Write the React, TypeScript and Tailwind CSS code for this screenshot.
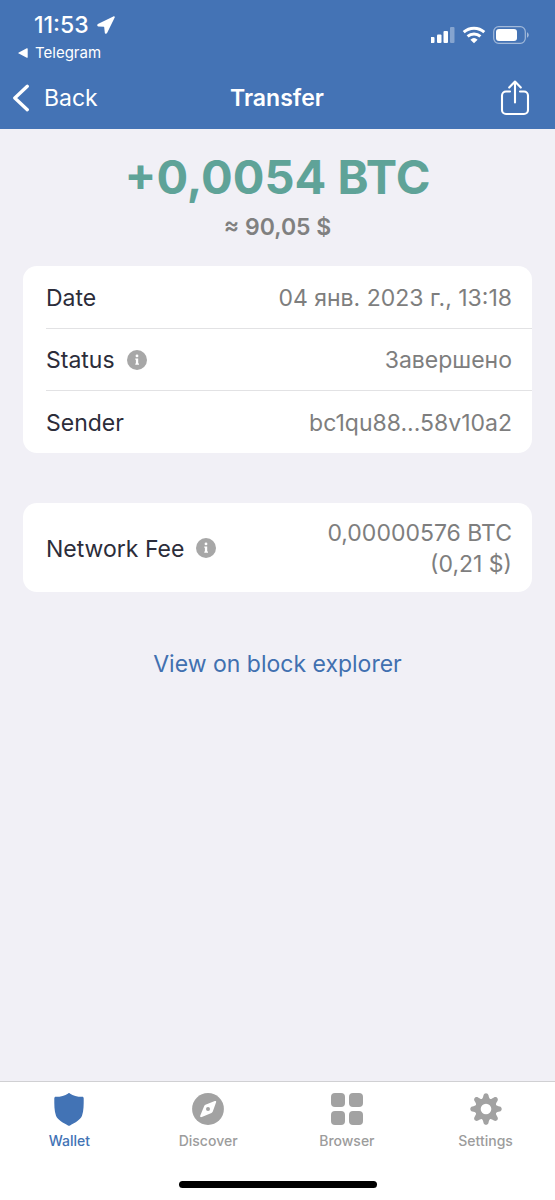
import type { ReactNode } from "react";

function InfoButton({ label }: { label: string }) {
  return (
    <button type="button" aria-label={label} className="ml-3 block pb-0.5">
      <svg viewBox="0 0 20 20" className="block size-5">
        <circle cx="10" cy="10" r="10" fill="#a7a7a7" />
        <circle cx="10" cy="5.9" r="1.4" fill="#fff" />
        <path d="M8.300 8.400h2.900v5h.8v1.400H8.300v-1.400h.6V9.800h-.6z" fill="#fff" />
      </svg>
    </button>
  );
}

function Row({ label, info, children }: { label: string; info?: string; children: ReactNode }) {
  return (
    <div className="flex min-h-[62px] items-center justify-between pt-0.5 pr-5">
      <dt className="flex items-center text-[#2c2d3a]">
        {label}
        {info && <InfoButton label={info} />}
      </dt>
      <dd className="text-right text-[#7e7e7e]">{children}</dd>
    </div>
  );
}

function StatusBar() {
  return (
    <div className="flex justify-between pt-3 pr-6 pl-[18px]">
      <div>
        <div className="flex h-[26px] items-center gap-2 pl-4 text-[23px] font-medium">
          11:53
          <svg viewBox="0 0 18 18" className="size-[18px]" fill="#fff">
            <path d="M16.300.400.900 8.100c-1 .6-.8 2.200.4 2.300l5.500.4c.2 0 .4.200.4.400l.6 5.600c.1 1.200 1.700 1.400 2.300.3L17.700 1.600c.4-.9-.5-1.600-1.400-1.200z" />
          </svg>
        </div>
        <a href="#telegram" className="mt-1 flex h-[22px] items-center gap-[7px] text-[15px]">
          <svg viewBox="0 0 10 10" className="size-[10px]" fill="#fff">
            <path d="M9.700.8v8.400c0 .6-.4.8-.9.5L.8 5.600C.2 5.200.2 4.800.8 4.400L8.800.3c.5-.3.9-.1.9.5z" />
          </svg>
          Telegram
        </a>
      </div>
      <svg viewBox="0 0 100 20" className="mt-[13px] h-5 w-[100px]" fill="#fff">
        <rect x="-1" y="12" width="4.500" height="6" rx="1" />
        <rect x="6" y="9.500" width="4.500" height="8.500" rx="1" />
        <rect x="12.500" y="6" width="4.500" height="12" rx="1" />
        <rect x="19" y="2" width="4.500" height="16" rx="1" opacity=".35" />
        <g fill="none" stroke="#fff" strokeWidth="3">
          <path d="M32.700 7.200a15.500 15.500 0 0 1 20.600 0" />
          <path d="M36.600 11.400a9.600 9.600 0 0 1 12.800 0" />
        </g>
        <path d="M39.400 14.700a5.400 5.400 0 0 1 7.200 0L43 18.300z" />
        <rect x="62.700" y="1.700" width="31.600" height="16.600" rx="5" fill="none" stroke="#fff" strokeWidth="1.200" opacity=".5" />
        <rect x="65" y="4" width="21" height="12" rx="3" />
        <path d="M96 7.300v5.400c2.400-1 2.400-4.400 0-5.400z" opacity=".5" />
      </svg>
    </div>
  );
}

function ShieldIcon() {
  return (
    <svg viewBox="0 0 32 34" className="h-[34px] w-8" fill="#4273b5">
      <path d="M15.200.4c.5-.4 1.100-.4 1.600 0 3.500 2.300 7.200 3.300 12.400 3.400.9 0 1.500.7 1.500 1.600 0 5.800.1 12.200-1.700 17.400-1.600 4.200-6.600 6.600-12 9.700-.6.4-1.400.4-2 0-5.400-3.100-10.400-5.500-12-9.700C1.200 17.600 1.300 11.200 1.300 5.400c0-.9.6-1.600 1.500-1.600 5.200-.1 8.900-1.100 12.400-3.400z" />
    </svg>
  );
}

function CompassIcon() {
  return (
    <svg viewBox="0 0 32 32" className="size-8">
      <circle cx="16" cy="16" r="15.900" fill="#a2a2a2" />
      <path d="M22.800 8c1-.4 1.700.3 1.300 1.300l-3.300 9.200c-.2.600-.7 1.100-1.300 1.400l-9.700 4.200c-1.200.5-2-.3-1.500-1.500l3.800-9.400c.3-.7.700-1.100 1.300-1.400z" fill="#fff" />
      <circle cx="16" cy="16" r="2" fill="#a2a2a2" />
    </svg>
  );
}

function GridIcon() {
  return (
    <svg viewBox="0 0 32 32" className="size-8" fill="#a2a2a2">
      <rect x="0" y="0" width="14" height="14" rx="4" />
      <rect x="18" y="0" width="14" height="14" rx="4" />
      <rect x="0" y="18" width="14" height="14" rx="4" />
      <rect x="18" y="18" width="14" height="14" rx="4" />
    </svg>
  );
}

function GearIcon() {
  return (
    <svg viewBox="-16 -16 32 32" className="size-8" fill="#a2a2a2">
      <circle r="10.800" />
      {[0, 45, 90, 135, 180, 225, 270, 315].map((angle) => (
        <path
          key={angle}
          transform={`rotate(${angle})`}
          d="M-4.200-9.900C-3.200-10.500-2.900-12-2.500-13.700-1.900-16.400 1.900-16.400 2.500-13.700 2.900-12 3.200-10.500 4.200-9.900L0 0z"
        />
      ))}
      <circle r="5.300" fill="#fff" />
    </svg>
  );
}

const tabs = [
  { label: "Wallet", icon: <ShieldIcon />, active: true },
  { label: "Discover", icon: <CompassIcon />, active: false },
  { label: "Browser", icon: <GridIcon />, active: false },
  { label: "Settings", icon: <GearIcon />, active: false },
];

export default function App() {
  return (
    <div className="flex min-h-screen flex-col bg-[#f1f0f6] font-['Inter',sans-serif]">
      <header className="bg-[#4473b5] text-white">
        <StatusBar />
        <div className="grid h-[65px] grid-cols-3 items-center pt-[3px] pr-[25px] pl-3 text-[23px]">
          <button type="button" className="flex items-center gap-[14px] justify-self-start">
            <svg viewBox="0 0 18 28" className="h-7 w-[18px]" fill="none" stroke="#fff" strokeWidth="3.300" strokeLinecap="round" strokeLinejoin="round">
              <path d="M15.300 2.300 2.800 14l12.500 11.700" />
            </svg>
            Back
          </button>
          <h1 className="pl-3 text-center font-semibold">Transfer</h1>
          <button type="button" aria-label="Share" className="justify-self-end">
            <svg viewBox="0 0 30 36" className="h-9 w-[30px]" fill="none" stroke="#fff" strokeWidth="2.100" strokeLinecap="round" strokeLinejoin="round">
              <path d="M10 11.500H6a4 4 0 0 0-4 4V30a4 4 0 0 0 4 4h18a4 4 0 0 0 4-4V15.500a4 4 0 0 0-4-4h-4" />
              <path d="M15 22.500V2M9.200 7.600 15 1.600l5.800 6" />
            </svg>
          </button>
        </div>
      </header>

      <main className="flex-1 px-[23px] pt-5 text-[23px]">
        <p className="text-center text-[47px] leading-[56px] font-bold text-[#5fa398]">+0,0054 BTC</p>
        <p className="mt-2 text-center leading-7 font-semibold text-[#808080]">≈ 90,05 $</p>

        <dl className="mt-[25px] divide-y divide-[#e2e2e4] rounded-[14px] bg-white pt-px pl-[23px]">
          <Row label="Date">04 янв. 2023 г., 13:18</Row>
          <Row label="Status" info="About status">Завершено</Row>
          <Row label="Sender">bc1qu88...58v10a2</Row>
        </dl>

        <dl className="mt-[50px] rounded-[14px] bg-white pt-[13px] pb-3 pl-[23px] leading-[31px]">
          <Row label="Network Fee" info="About network fee">
            0,00000576 BTC
            <br />
            (0,21 $)
          </Row>
        </dl>

        <div className="mt-[55px] text-center">
          <a href="#explorer" className="text-[#4170b0]">View on block explorer</a>
        </div>
      </main>

      <footer className="border-t border-[#d0d0d3] bg-white pt-[11px] pb-3">
        <nav className="grid grid-cols-4 text-[14px] leading-5 font-medium">
          {tabs.map((tab) => (
            <a
              key={tab.label}
              href={`#${tab.label.toLowerCase()}`}
              className={tab.active ? "flex flex-col items-center text-[#4273b5]" : "flex flex-col items-center text-[#9c9c9c]"}
            >
              <span className="flex h-[38px] items-start">{tab.icon}</span>
              {tab.label}
            </a>
          ))}
        </nav>
        <div className="mx-auto mt-[30px] h-[7px] w-[198px] rounded-full bg-black" />
      </footer>
    </div>
  );
}
